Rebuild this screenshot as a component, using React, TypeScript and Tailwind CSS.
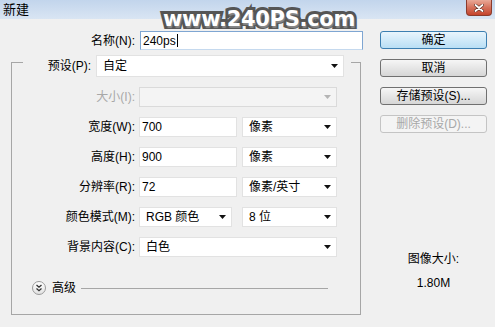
import React from "react";

const FONT = "font-['Liberation_Sans','Noto_Sans_CJK_SC',sans-serif]";

function Arrow({ disabled }: { disabled?: boolean }) {
  return (
    <svg width="7" height="4" viewBox="0 0 7 4" className="shrink-0">
      <path d="M0 0H7L3.5 4Z" fill={disabled ? "#b4b4b4" : "#111"} />
    </svg>
  );
}

function Select({ w, text, disabled, h = "h-[20px]" }: { w: string; text?: string; disabled?: boolean; h?: string }) {
  return (
    <div
      className={`${w} ${h} flex items-center justify-between pl-[6px] pr-[5px] border ${
        disabled ? "bg-[#f4f4f4] border-[#dadada]" : "bg-white border-[#e2e2e2]"
      }`}
    >
      <span className="leading-none">{text}</span>
      <Arrow disabled={disabled} />
    </div>
  );
}

function Input({ w, text }: { w: string; text: string }) {
  return (
    <div className={`${w} h-[20px] flex items-center pl-[2px] bg-white border border-[#e2e2e2]`}>
      <span className="leading-none">{text}</span>
    </div>
  );
}

function Row({ label, disabled, children }: { label: string; disabled?: boolean; children: React.ReactNode }) {
  return (
    <div className="flex items-center h-[20px]">
      <div className={`w-[124px] text-right pr-[1px] ${disabled ? "text-[#a8a8a8]" : ""}`}>{label}</div>
      <div className="flex items-center gap-[5px] ml-[3px]">{children}</div>
    </div>
  );
}

function Button({ label, primary, disabled }: { label: string; primary?: boolean; disabled?: boolean }) {
  const cls = primary
    ? "bg-gradient-to-b from-[#e8f5fd] to-[#b9dff5] border-[#3c7fb1]"
    : disabled
    ? "bg-[#f4f4f4] border-[#c4c4c4] text-[#a8a8a8]"
    : "bg-gradient-to-b from-[#f6f6f6] to-[#d6d6d6] border-[#707070]";
  return (
    <div className={`h-[18px] w-[107px] rounded-[3px] border flex items-center justify-center leading-none ${cls}`}>
      {label}
    </div>
  );
}

export default function App() {
  return (
    <div className={`w-[495px] h-[327px] bg-[#f0f0f0] relative overflow-hidden text-[12px] text-black ${FONT}`}>
      {/* title bar */}
      <div className="h-[19px] bg-gradient-to-b from-[#c2d5ec] to-[#d9e5f3] flex items-start justify-between pl-[3px] pr-[3px]">
        <span className="text-[13px] leading-none mt-[3px]">新建</span>
        <div className="w-[26px] h-[16px] rounded-b-[4px] border border-t-0 border-[#8b3b2c] bg-gradient-to-b from-[#e9a897] via-[#d5715c] to-[#c4432b] flex items-center justify-center">
          <svg width="10" height="8" viewBox="0 0 10 8">
            <path d="M1.5 1L8.5 7M8.5 1L1.5 7" stroke="#5a2a20" strokeWidth="3" strokeLinecap="round" />
            <path d="M1.5 1L8.5 7M8.5 1L1.5 7" stroke="#fff" strokeWidth="1.8" strokeLinecap="round" />
          </svg>
        </div>
      </div>

      <div className="flex pt-[12px]">
        {/* left column */}
        <div className="w-[368px]">
          <div className="flex items-center h-[19px]">
            <div className="w-[136px] text-right pr-[1px]">名称(N):</div>
            <div className="ml-[4px] w-[223px] h-[19px] flex items-center pl-[2px] bg-white border border-[#7fa6d2] border-b-[#c5d9ee]">
              <span className="leading-none">240ps</span>
              <span className="w-px h-[13px] bg-black ml-px" />
            </div>
          </div>

          <div className="mt-[12px] ml-[11px] w-[350px] h-[253px] border border-[#a6a6a6]">
            <div className="-mt-[8px] ml-[11px] w-[328px] h-[22px] bg-[#f0f0f0] flex items-center pr-[7px]">
              <div className="w-[69px] text-right pr-[1px]">预设(P):</div>
              <div className="ml-[4px]">
                <Select w="w-[248px]" h="h-[22px]" text="自定" />
              </div>
            </div>

            <div className="mt-[10px] flex flex-col gap-[10px]">
              <Row label="大小(I):" disabled>
                <Select w="w-[198px]" disabled />
              </Row>
              <Row label="宽度(W):">
                <Input w="w-[98px]" text="700" />
                <Select w="w-[95px]" text="像素" />
              </Row>
              <Row label="高度(H):">
                <Input w="w-[98px]" text="900" />
                <Select w="w-[95px]" text="像素" />
              </Row>
              <Row label="分辨率(R):">
                <Input w="w-[98px]" text="72" />
                <Select w="w-[95px]" text="像素/英寸" />
              </Row>
              <Row label="颜色模式(M):">
                <div className="w-[98px] pr-[5px]">
                  <Select w="w-[93px]" text="RGB 颜色" />
                </div>
                <Select w="w-[95px]" text="8 位" />
              </Row>
              <Row label="背景内容(C):">
                <Select w="w-[198px]" text="白色" />
              </Row>
            </div>

            <div className="mt-[24px] flex items-center h-[14px] pl-[20px] pr-[32px]">
              <div className="w-[14px] h-[14px] rounded-full border border-[#9a9a9a] bg-gradient-to-b from-white to-[#e2e2e2] flex items-center justify-center">
                <svg width="8" height="8" viewBox="0 0 8 8">
                  <path d="M1.5 1L4 3.2L6.5 1M1.5 4.5L4 6.7L6.5 4.5" stroke="#333" strokeWidth="1.3" fill="none" />
                </svg>
              </div>
              <span className="ml-[6px] leading-none">高级</span>
              <div className="flex-1 h-px bg-[#a6a6a6] ml-[5px]" />
            </div>
          </div>
        </div>

        {/* right column */}
        <div className="ml-[12px] w-[107px] flex flex-col">
          <div className="flex flex-col gap-[10px]">
            <Button label="确定" primary />
            <Button label="取消" />
            <Button label="存储预设(S)..." />
            <Button label="删除预设(D)..." disabled />
          </div>
          <div className="mt-[118px] text-center leading-[16px]">图像大小:</div>
          <div className="mt-[8px] text-center leading-[16px]">1.80M</div>
        </div>
      </div>

      {/* watermark overlay */}
      <div className="absolute left-[163px] top-[9px] text-[21px] font-bold text-white leading-none tracking-[-0.3px] font-['DejaVu_Sans',sans-serif] [-webkit-text-stroke:6px_#555] [paint-order:stroke_fill] [text-shadow:1px_2px_1px_#888]">
        www.240PS.com
      </div>
    </div>
  );
}
